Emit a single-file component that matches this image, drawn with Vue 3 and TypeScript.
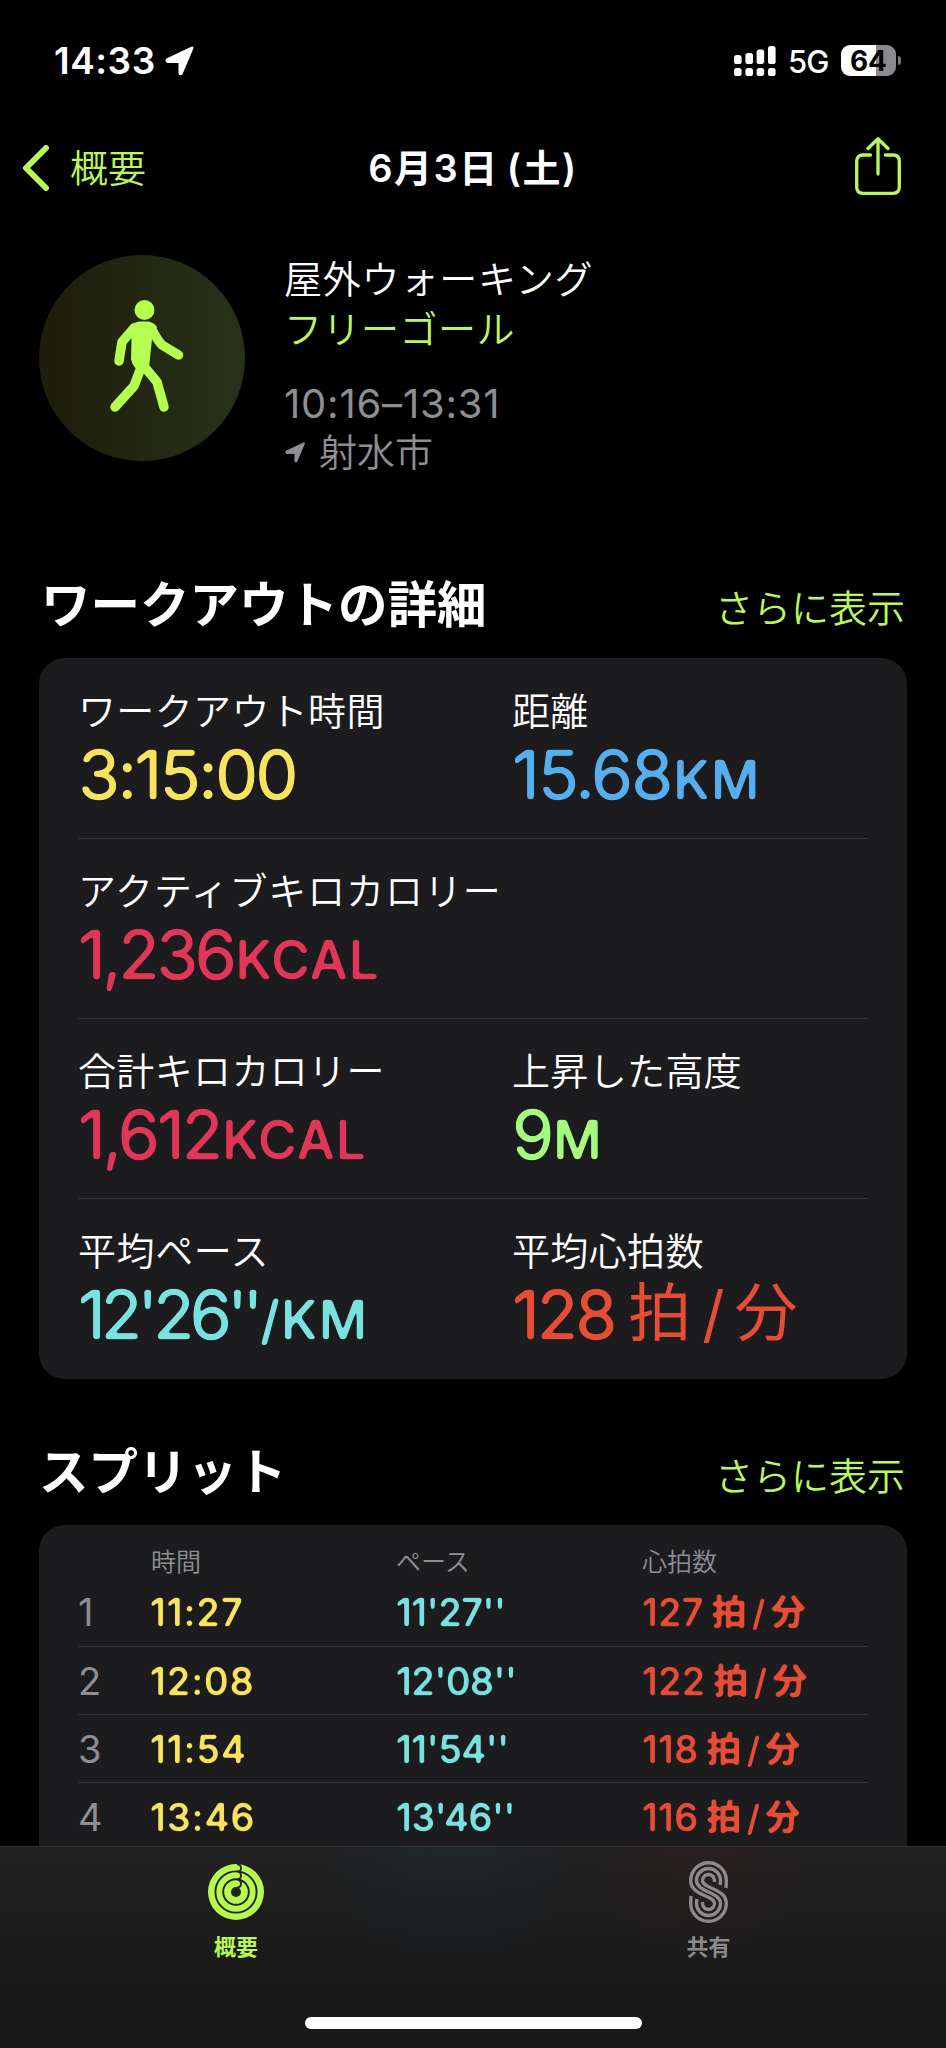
<script setup lang="ts">
interface Metric {
  label: string
  labelTracking?: number
  value: string
  tracking: number
  unit?: string
  perMinute?: boolean
  tone: string
}

interface Split {
  index: number
  time: string
  pace: string
  heart: number
}

const metricRows: Metric[][] = [
  [
    { label: 'ワークアウト時間', value: '3:15:00', tracking: -2.6, tone: 'yellow' },
    { label: '距離', value: '15.68', tracking: -2, unit: 'KM', tone: 'blue' },
  ],
  [{ label: 'アクティブキロカロリー', labelTracking: 0.9, value: '1,236', tracking: -3.5, unit: 'KCAL', tone: 'pink' }],
  [
    { label: '合計キロカロリー', value: '1,612', tracking: -2.9, unit: 'KCAL', tone: 'pink' },
    { label: '上昇した高度', value: '9', tracking: -3, unit: 'M', tone: 'green' },
  ],
  [
    { label: '平均ペース', labelTracking: 0.6, value: "12'26''", tracking: -4.8, unit: '/KM', tone: 'teal' },
    { label: '平均心拍数', value: '128', tracking: -3, perMinute: true, tone: 'red' },
  ],
]

const splits: Split[] = [
  { index: 1, time: '11:27', pace: "11'27''", heart: 127 },
  { index: 2, time: '12:08', pace: "12'08''", heart: 122 },
  { index: 3, time: '11:54', pace: "11'54''", heart: 118 },
  { index: 4, time: '13:46', pace: "13'46''", heart: 116 },
]
</script>

<template>
  <div class="screen" lang="ja">
    <svg class="defs" width="0" height="0">
      <filter id="round-ends" x="-5%" y="-10%" width="110%" height="120%" color-interpolation-filters="sRGB">
        <feGaussianBlur stdDeviation="1.7" />
        <feComponentTransfer><feFuncA type="linear" slope="4.5" intercept="-1.45" /></feComponentTransfer>
      </filter>
      <filter id="round-ends-small" x="-5%" y="-10%" width="110%" height="120%" color-interpolation-filters="sRGB">
        <feGaussianBlur stdDeviation="1" />
        <feComponentTransfer><feFuncA type="linear" slope="3" intercept="-0.8" /></feComponentTransfer>
      </filter>
    </svg>

    <header class="status">
      <div class="clock">
        <span class="clock-time">14:33</span>
        <svg class="loc" viewBox="0 0 30 30"><path d="M2.600 13.600 27 2 16.200 27.400Q15.400 28.400 15 27V15.600H3.200Q1 15 2.600 13.600Z" /></svg>
      </div>
      <div class="indicators">
        <svg class="signal" viewBox="0 0 42 30">
          <rect x="0" y="9" width="7.600" height="9" rx="2.600" />
          <rect x="11.400" y="7" width="7.600" height="11" rx="2.600" />
          <rect x="22.600" y="3.500" width="7.600" height="14.500" rx="2.600" />
          <rect x="34" y="0" width="7.600" height="18" rx="2.600" />
          <rect x="0" y="22" width="7.600" height="8" rx="2.600" />
          <rect x="11.400" y="22" width="7.600" height="8" rx="2.600" />
          <rect x="22.600" y="22" width="7.600" height="8" rx="2.600" />
          <rect x="34" y="22" width="7.600" height="8" rx="2.600" />
        </svg>
        <span class="network">5G</span>
        <div class="battery">64</div>
        <i class="battery-tip"></i>
      </div>
    </header>

    <nav class="nav">
      <a class="back">
        <svg class="chevron" viewBox="0 0 27 46"><path d="M24 3 4 23 24 43" /></svg>
        <span>概要</span>
      </a>
      <h1 class="title">6月3日 (土)</h1>
      <svg class="share" viewBox="0 0 46 58">
        <path d="M15.500 18H8Q1.700 18 1.700 24.300V50Q1.700 56.300 8 56.300H38Q44.300 56.300 44.300 50V24.300Q44.300 18 38 18H30.500M23 37V2M13 11.500 23 1.800 33 11.500" />
      </svg>
    </nav>

    <section class="summary">
      <div class="badge">
        <svg viewBox="0 0 206 206">
          <circle cx="105.500" cy="55" r="10" />
          <path class="torso" d="M91 71Q95 66.500 102 66.500H108Q114 66.500 118 72L113 84 110.500 108Q110 115 104 116 94 115 92 104L92.500 85Z" />
          <path d="M95 73 83 87 80 106M112 73Q119 86 123 90L139.500 100M103 110 95 131 76 152M104 110 118 127 125 152" />
        </svg>
      </div>
      <div class="facts">
        <p class="activity">屋外ウォーキング</p>
        <p class="goal">フリーゴール</p>
        <p class="period">10:16–13:31</p>
        <p class="place">
          <svg viewBox="0 0 30 30"><path d="M2.600 13.600 27 2 16.200 27.400Q15.400 28.400 15 27V15.600H3.200Q1 15 2.600 13.600Z" /></svg>
          <span>射水市</span>
        </p>
      </div>
    </section>

    <div class="heading">
      <h2>ワークアウトの詳細</h2>
      <a>さらに表示</a>
    </div>
    <section class="card">
      <div v-for="(row, r) in metricRows" :key="r" class="metric-row">
        <div v-for="m in row" :key="m.label" class="metric">
          <p class="metric-label" :style="{ letterSpacing: (m.labelTracking ?? 0.35) + 'px' }">{{ m.label }}</p>
          <p class="metric-value" :class="m.tone">
            <span class="figure"><span :style="{ letterSpacing: m.tracking + 'px' }">{{ m.value }}</span><span v-if="m.unit" class="caps">{{ m.unit }}</span></span>
            <span v-if="m.perMinute" class="rate"><i>拍</i><em>/</em><i>分</i></span>
          </p>
        </div>
      </div>
    </section>

    <div class="heading second">
      <h2>スプリット</h2>
      <a>さらに表示</a>
    </div>
    <section class="card splits">
      <div class="split-row split-head">
        <span></span><span>時間</span><span>ペース</span><span>心拍数</span>
      </div>
      <div v-for="s in splits" :key="s.index" class="split-row">
        <span class="index">{{ s.index }}</span>
        <span class="time yellow">{{ s.time }}</span>
        <span class="pace teal">{{ s.pace }}</span>
        <span class="heart red">{{ s.heart }}<b>拍</b><em>/</em><b>分</b></span>
      </div>
    </section>

    <footer class="tabs">
      <a class="tab active">
        <svg class="rings" viewBox="-28 -28 56 56">
          <circle r="28" />
          <circle class="gap" r="20.600" />
          <circle class="gap" r="12.800" />
          <circle class="hole" r="5" />
          <path class="gap" d="M1 -28Q5 -27.500 5 -24T1.500 -20.600M1 -20.600Q5 -20 5 -16.500T1.500 -12.800M1 -12.800Q5 -12 5 -8.500T1.500 -4.500" />
        </svg>
        <span>概要</span>
      </a>
      <a class="tab">
        <svg class="strands" viewBox="0 0 39 62">
          <path d="M37 27Q37.300 23 37.300 19.500A17.800 17.800 0 0 0 1.700 19.500C1.700 35 25.500 34 25.500 42.500A6 6 0 0 1 13.500 42.500V41" />
          <path d="M31 24Q31.500 22 31.500 19.500A12 12 0 0 0 7.500 19.500C7.500 31 31.500 31 31.500 42.500A12 12 0 0 1 7.500 42.500Q7.500 40 8 38" />
          <path d="M25.500 21V19.500A6 6 0 0 0 13.500 19.500C13.500 28 37.300 27 37.300 42.500A17.800 17.800 0 0 1 1.700 42.500Q1.700 39 2 35" />
        </svg>
        <span>共有</span>
      </a>
      <i class="home-bar"></i>
    </footer>
  </div>
</template>

<style>
body {
  margin: 0;
  background: #000;
}
</style>

<style scoped>
.screen {
  position: relative;
  width: 946px;
  height: 2048px;
  overflow: hidden;
  background: #000;
  color: #fff;
  font-family: Inter, 'Noto Sans CJK JP', sans-serif;
  font-size: 38px;
  font-weight: 350;
}
.defs { position: absolute; }
p, h1, h2 { margin: 0; }
i, em { font-style: normal; }
svg { display: block; flex: none; fill: currentColor; }
.yellow { color: #f7e35f; }
.blue { color: #56aeee; }
.pink { color: #e03657; }
.green { color: #a5fa7e; }
.teal { color: #79e2e0; }
.red { color: #e64d34; }

.status {
  display: flex;
  justify-content: space-between;
  align-items: center;
  height: 121px;
  padding: 0 45px 0 54px;
  box-sizing: border-box;
}
.clock, .indicators { display: flex; align-items: center; }
.clock-time { width: 111px; font-size: 37px; font-weight: 600; letter-spacing: 0.500px; }
.loc { width: 30px; height: 30px; }
.loc path, .place path { stroke: currentColor; stroke-width: 3; stroke-linejoin: round; }
.signal { width: 42px; height: 30px; }
.network { width: 53px; margin-left: 12px; padding-top: 3px; font-size: 31px; font-weight: 500; line-height: 32px; letter-spacing: -1px; }
.battery {
  width: 55px;
  height: 31px;
  border-radius: 9px;
  background: linear-gradient(90deg, #fff 64%, #8b8b8b 64%);
  color: #000;
  font-size: 28px;
  font-weight: 700;
  line-height: 32px;
  text-align: center;
}
.battery-tip { width: 3px; height: 9px; margin-left: 2px; border-radius: 0 4px 4px 0; background: #777; }

.nav {
  display: grid;
  grid-template-columns: 1fr auto 1fr;
  align-items: center;
  height: 94px;
  padding: 0 46px;
  color: #b9f85c;
}
.back { display: flex; align-items: center; gap: 21px; margin-left: -24px; }
.back span { margin-top: -5px; }
.chevron { width: 27px; height: 46px; }
.chevron path { fill: none; stroke: currentColor; stroke-width: 6; stroke-linecap: round; stroke-linejoin: round; }
.title { color: #fff; font-size: 38px; font-weight: 600; line-height: 60px; letter-spacing: 1.500px; word-spacing: -3px; }
.share { justify-self: end; width: 46px; height: 58px; margin: -4px -1px 0 0; }
.share path { fill: none; stroke: currentColor; stroke-width: 3.300; stroke-linecap: round; stroke-linejoin: round; }

.summary { display: flex; gap: 39px; height: 302px; padding: 40px 39px 0; }
.badge { width: 206px; height: 206px; border-radius: 50%; background: linear-gradient(90deg, #1d1d0a, #28321a); color: #b5fd4f; }
.badge path { fill: none; stroke: currentColor; stroke-width: 9.500; stroke-linecap: round; stroke-linejoin: round; }
.badge .torso { fill: currentColor; stroke: none; }
.facts { line-height: 49px; }
.activity { letter-spacing: 0.800px; }
.goal { color: #b9f85c; margin-top: 1px; letter-spacing: 0.500px; }
.period { margin-top: 25px; color: #8e8e93; font-size: 40px; font-weight: 400; letter-spacing: 0.800px; }
.place { display: flex; align-items: center; gap: 13px; color: #8e8e93; }
.place svg { width: 21px; height: 21px; margin-left: 1px; }

.heading {
  display: flex;
  justify-content: space-between;
  align-items: center;
  height: 101px;
  padding: 0 41px 0 41px;
}
.heading h2 { font-size: 49.500px; font-weight: 700; line-height: 60px; margin-top: -5px; }
.heading a { line-height: 50px; color: #b9f85c; }
.second { height: 106px; margin-top: 40px; }
.second h2 { margin: 0 0 0 -2px; }
.second a { margin-top: 7px; }

.card { width: 868px; height: 721px; margin: 0 auto; padding: 0 39px; border-radius: 26px; background: #1c1c1e; box-sizing: border-box; }
.metric-row { display: grid; grid-template-columns: 434px 1fr; height: 180px; padding-top: 30px; box-sizing: border-box; }
.metric-row + .metric-row { padding-top: 29px; }
.metric-row + .metric-row, .split-row + .split-row + .split-row { border-top: 1px solid #343436; }
.metric { white-space: nowrap; }
.metric-label { line-height: 46px; }
.metric-value { display: flex; height: 80px; font-size: 68px; font-weight: 400; line-height: 80px; }
.figure { filter: url(#round-ends); }
.caps { margin-left: 2px; font-size: 53px; font-weight: 450; letter-spacing: 1.200px; }
.rate { display: flex; margin-left: 14px; }
.rate i { font-size: 63px; margin-top: -2px; }
.rate em { margin: 0 10px 0 11px; font-size: 62px; }

.splits { height: 560px; }
.split-row { display: grid; grid-template-columns: 73px 245px 246px 1fr; align-items: center; height: 68px; box-sizing: border-box; font-weight: 500; white-space: nowrap; }
.split-head { height: 53px; padding-top: 17px; color: #8e8e93; font-size: 25px; font-weight: 350; }
.index { color: #8e8e93; font-weight: 400; }
.time, .pace, .heart { filter: url(#round-ends-small); }
.time { margin-left: -1px; letter-spacing: 1.100px; }
.pace { letter-spacing: -0.400px; }
.heart { display: flex; align-items: center; letter-spacing: 0.300px; }
.heart b { margin-top: 0; font-size: 35px; font-weight: 600; line-height: 50px; }
.heart b:first-of-type { margin-left: 8px; }
.heart em { margin: 2px 5px 0 5px; font-size: 36px; }

.tabs {
  position: absolute;
  left: 0;
  right: 0;
  bottom: 0;
  height: 202px;
  display: grid;
  grid-template-columns: 472px 473px;
  box-sizing: border-box;
  border-top: 1px solid #303032;
  background:
    radial-gradient(circle at 700px 0, rgba(90, 25, 15, 0.120), transparent 130px),
    radial-gradient(circle at 450px 0, rgba(20, 75, 70, 0.130), transparent 130px),
    linear-gradient(#222223, #181819 75%);
}
.tab { display: flex; flex-direction: column; align-items: center; color: #8c8a8a; font-size: 22px; font-weight: 700; line-height: 30px; }
.tab span { margin-top: 9px; }
.active { color: #b9f850; }
.rings { width: 56px; height: 56px; margin: 17px 0 3px; }
.rings .gap { fill: none; stroke: #20241a; stroke-width: 1.900; }
.rings .hole { fill: #20241a; }
.strands { width: 39px; height: 62px; margin-top: 14px; }
.strands path { fill: none; stroke: currentColor; stroke-width: 3.400; }
.home-bar { position: absolute; left: 305px; bottom: 19px; width: 337px; height: 12px; border-radius: 6px; background: #fff; }
</style>
